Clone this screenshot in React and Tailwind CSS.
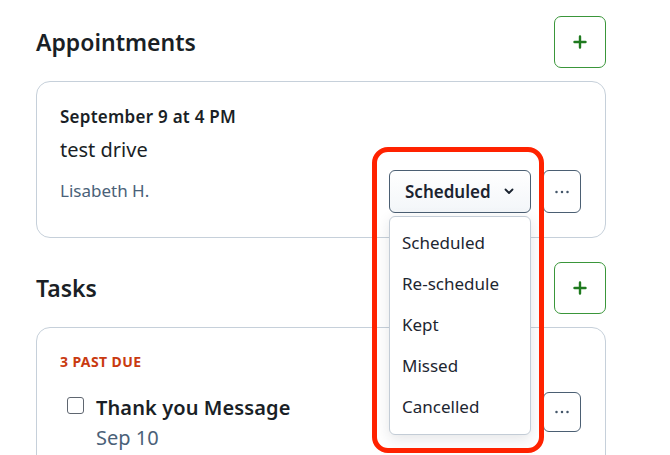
import React from "react";

function Plus() {
  return (
    <svg width="14" height="14" viewBox="0 0 14 14" fill="none">
      <path d="M7 1.5v11M1.5 7h11" stroke="#1f7a1f" strokeWidth="2.4" strokeLinecap="round" />
    </svg>
  );
}

function Dots() {
  return (
    <svg width="16" height="6" viewBox="0 0 16 6">
      <circle cx="2.5" cy="3" r="1.25" fill="#44566a" />
      <circle cx="8" cy="3" r="1.25" fill="#44566a" />
      <circle cx="13.5" cy="3" r="1.25" fill="#44566a" />
    </svg>
  );
}

function Chevron() {
  return (
    <svg width="10" height="7" viewBox="0 0 10 7" fill="none">
      <path d="M1.5 1.5 5 5l3.5-3.5" stroke="#1b2430" strokeWidth="1.8" strokeLinecap="round" strokeLinejoin="round" />
    </svg>
  );
}

function AddButton() {
  return (
    <button className="w-[52px] h-[52px] rounded-[7px] border-[1.5px] border-[#3a963a] bg-white flex items-center justify-center">
      <Plus />
    </button>
  );
}

export default function App() {
  const items = ["Scheduled", "Re-schedule", "Kept", "Missed", "Cancelled"];
  return (
    <div
      className="w-[670px] h-[455px] overflow-hidden bg-white text-[#1a1f26]"
      style={{ fontFamily: '"Noto Sans", "Open Sans", sans-serif' }}
    >
      <div className="ml-[36px] w-[570px] pt-[16px]">
        {/* Appointments header */}
        <div className="flex items-center justify-between">
          <h2 className="text-[23px] font-semibold leading-[28px]">Appointments</h2>
          <AddButton />
        </div>

        {/* Appointment card */}
        <div className="mt-[13px] h-[157px] rounded-[14px] border border-[#c6d0da] pl-[23px] pr-[24px] pt-[23px] flex justify-between">
          <div className="flex flex-col">
            <div className="text-[17px] font-semibold leading-[24px] tracking-[0.25px]">September 9 at 4 PM</div>
            <div className="mt-[7px] text-[20px] leading-[28px]">test drive</div>
            <div className="mt-[15px] text-[17px] leading-[24px] text-[#4a6178]">Lisabeth H.</div>
          </div>
          <div className="flex items-start gap-[12px] pt-[65px]">
            <div className="relative">
              <button className="w-[142px] h-[43px] rounded-[6px] border border-[#4b5f73] bg-gradient-to-b from-white to-[#f3f6f9] flex items-center pl-[15px] pr-[16px] justify-between">
                <span className="text-[17px] font-semibold text-[#1b2430]">Scheduled</span>
                <Chevron />
              </button>
              {/* Dropdown menu */}
              <div className="absolute left-0 top-[46px] z-10 w-[142px] h-[219px] rounded-[6px] border border-[#c3ccd6] bg-white shadow-[0_4px_14px_rgba(30,45,60,0.12)] pt-[5px]">
                {items.map((it) => (
                  <div key={it} className="h-[41px] flex items-center pl-[12px] text-[17px] text-[#1d2631]">
                    {it}
                  </div>
                ))}
              </div>
              {/* Red highlight annotation */}
              <div className="absolute left-[-17px] top-[-23px] z-20 w-[172px] h-[306px] rounded-[16px] border-[5px] border-[#ff2200] pointer-events-none" />
            </div>
            <button className="w-[38px] h-[43px] rounded-[6px] border border-[#4b5f73] bg-white flex items-center justify-center">
              <Dots />
            </button>
          </div>
        </div>

        {/* Tasks header */}
        <div className="mt-[24px] flex items-center justify-between">
          <h2 className="text-[23px] font-semibold leading-[28px]">Tasks</h2>
          <AddButton />
        </div>

        {/* Tasks card */}
        <div className="mt-[13px] h-[200px] rounded-[14px] border border-[#c6d0da] pl-[23px] pr-[24px] pt-[24px]">
          <div className="text-[14px] font-bold leading-[20px] text-[#c93a10] tracking-[0.4px]">3 PAST DUE</div>
          <div className="mt-[22px] flex justify-between">
            <div className="flex pl-[7px] gap-[12px]">
              <div className="mt-[3px] w-[17px] h-[17px] rounded-[3px] border-[1.5px] border-[#5f6670] bg-white" />
              <div className="flex flex-col">
                <div className="text-[20px] font-semibold leading-[28px] tracking-[0.1px]">Thank you Message</div>
                <div className="mt-[2px] text-[20px] leading-[28px] text-[#4a6178]">Sep 10</div>
              </div>
            </div>
            <button className="mt-[-2px] w-[38px] h-[40px] rounded-[6px] border border-[#4b5f73] bg-white flex items-center justify-center">
              <Dots />
            </button>
          </div>
        </div>
      </div>
    </div>
  );
}
